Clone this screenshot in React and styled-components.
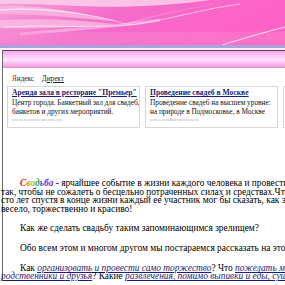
import React from "react";
import styled, { createGlobalStyle } from "styled-components";

const GlobalStyle = createGlobalStyle`
  html, body {
    margin: 0;
    padding: 0;
    background: #ffffff;
    overflow: hidden;
  }
  body {
    font-family: "Liberation Serif", "Times New Roman", serif;
    color: #000;
  }
`;

const ads = [
  {
    title: "Аренда зала в ресторане \"Премьер\"",
    lines: ["Центр города. Банкетный зал для свадеб,", "банкетов и других мероприятий."],
    url: "www.restoran-premier.ru",
  },
  {
    title: "Проведение свадеб в Москве",
    lines: ["Проведение свадеб на высшем уровне:", "на природе в Подмосковье, в Москве"],
    url: "www.svadba-moskva.ru",
  },
  {
    title: "Свадебные платья",
    lines: ["Большой выбор платьев", "для невест"],
    url: "www.plat.ru",
  },
];

const rainbow = ["#d81818", "#e89018", "#c8c010", "#28a048", "#2070d0", "#5030c0", "#a030b0"];

const Header = () => (
  <Banner>
    <svg width="285" height="45" viewBox="0 0 285 45">
      <defs>
        <linearGradient id="bg" x1="0" y1="0" x2="1" y2="0.3">
          <stop offset="0" stopColor="#f7a2d8" />
          <stop offset="0.45" stopColor="#f36cc9" />
          <stop offset="1" stopColor="#ff62c6" />
        </linearGradient>
        <linearGradient id="fade" x1="0" y1="0" x2="1" y2="0">
          <stop offset="0" stopColor="#ffffff" stopOpacity="0.8" />
          <stop offset="1" stopColor="#ffffff" stopOpacity="0" />
        </linearGradient>
      </defs>
      <rect width="285" height="45" fill="url(#bg)" />
      <path d="M0 0 H210 C170 6 120 8 80 6 C50 5 20 3 0 4 Z" fill="#fbd0ec" opacity="0.85" />
      <path d="M0 6 C40 4 90 14 120 22 C80 18 40 14 0 14 Z" fill="#f9b8e2" opacity="0.8" />
      <path d="M0 20 C40 18 80 20 115 24 C90 27 50 29 0 28 Z" fill="#fbc4e6" opacity="0.7" />
      <path d="M0 10 C50 6 110 18 125 24 C160 14 200 6 230 2" stroke="url(#fade)" strokeWidth="1.2" fill="none" />
      <path d="M5 27 C60 24 110 30 150 22 C190 14 210 8 240 4" stroke="#ffffff" strokeOpacity="0.6" strokeWidth="1" fill="none" />
      <path d="M20 34 C70 30 120 26 160 20" stroke="#ffffff" strokeOpacity="0.35" strokeWidth="3" fill="none" />
      <path d="M0 32 H285 V45 H0 Z" fill="#f890d4" opacity="0.35" />
      <path d="M222 45 C245 38 265 32 285 27" stroke="#ffffff" strokeOpacity="0.8" strokeWidth="1" fill="none" />
    </svg>
  </Banner>
);

const App = () => (
  <>
    <GlobalStyle />
    <Page>
      <Header />
      <Stripe />
      <Frame>
        <NavBar />
        <AdsBlock>
          <AdsLabel>
            <span className="ya">Я</span>ндекс <a>Директ</a>
          </AdsLabel>
          <AdsRow>
            {ads.map((ad) => (
              <AdBox key={ad.title}>
                <AdTitle>{ad.title}</AdTitle>
                {ad.lines.map((line) => (
                  <AdText key={line}>{line}</AdText>
                ))}
                <AdUrl>{ad.url}</AdUrl>
              </AdBox>
            ))}
          </AdsRow>
        </AdsBlock>
        <Article>
          <Para>
            <Line>
              <Brand>
                {"Свадьба".split("").map((ch, i) => (
                  <span key={i} style={{ color: rainbow[i] }}>
                    {ch}
                  </span>
                ))}
              </Brand>{" "}
              - ярчайшее событие в жизни каждого человека и провести ее
            </Line>
            <Line>так, чтобы не сожалеть о бесцельно потраченных силах и средствах.Что</Line>
            <Line>сто лет спустя в конце жизни каждый ее участник мог бы сказать, как это было</Line>
            <Line>весело, торжественно и красиво!</Line>
          </Para>
          <Para>
            <Line>Как же сделать свадьбу таким запоминающимся зрелищем?</Line>
          </Para>
          <Para>
            <Line>Обо всем этом и многом другом мы постараемся рассказать на этом сайте.</Line>
          </Para>
          <Para>
            <Line>
              Как <TextLink>организовать и провести само торжество</TextLink>? Что{" "}
              <TextLink>пожелать молодым их родителям,</TextLink>
            </Line>
            <Line>
              <TextLink>родственники и друзья</TextLink>? Какие{" "}
              <TextLink>развлечения, помимо выпивки и еды, существуют на свадьбе</TextLink>?
            </Line>
          </Para>
        </Article>
      </Frame>
    </Page>
  </>
);

export default App;

const Page = styled.div`
  width: 285px;
  height: 285px;
  overflow: hidden;
  background: #fff;
`;

const Banner = styled.div`
  height: 45px;
  svg {
    display: block;
  }
`;

const Stripe = styled.div`
  height: 3px;
  background: #aaa2da;
  border-bottom: 2px solid #fbeefa;
`;

const Frame = styled.div`
  margin-left: 2px;
  border-left: 1px solid #6a6a6a;
  width: 400px;
`;

const NavBar = styled.div`
  height: 16px;
  border-top: 1px solid #6a3a5e;
  border-bottom: 1px solid #e592d6;
  background: linear-gradient(#f4a6e8 0%, #fcc8f6 30%, #ffe2ff 55%, #f8b8ee 80%, #f0a0e2 100%);
`;

const AdsBlock = styled.div`
  padding: 6px 0 0 4px;
`;

const AdsLabel = styled.div`
  font-size: 7.2px;
  line-height: 10px;
  padding-left: 5px;
  color: #222;
  .ya {
    color: #d01010;
  }
  a {
    margin-left: 6px;
    text-decoration: underline;
  }
`;

const AdsRow = styled.div`
  display: flex;
  gap: 5.5px;
  margin-top: 2px;
`;

const AdBox = styled.div`
  flex: none;
  box-sizing: border-box;
  width: 132.5px;
  min-width: 0;
  height: 42px;
  overflow: hidden;
  padding: 1px 2px 0 4px;
  border: 1px solid #d8d8d8;
`;

const AdTitle = styled.div`
  font-size: 7.6px;
  line-height: 10px;
  font-weight: bold;
  color: #1c1c7a;
  text-decoration: underline;
  white-space: nowrap;
`;

const AdText = styled.div`
  font-size: 7.3px;
  line-height: 9px;
  color: #111;
  white-space: nowrap;
  &:first-of-type {
    margin-top: 1px;
  }
`;

const AdUrl = styled.div`
  font-size: 5px;
  line-height: 8px;
  color: #b0b0b0;
`;

const Article = styled.div`
  padding-top: 51px;
  margin-left: -2px;
  font-size: 9.4px;
  line-height: 8.6px;
`;

const Para = styled.p`
  margin: 0 0 11px 0;
`;

const Line = styled.div`
  white-space: nowrap;
  &:first-child {
    text-indent: 19px;
  }
`;

const Brand = styled.i`
  font-weight: bold;
`;

const TextLink = styled.a`
  font-style: italic;
  color: #1c1c7a;
  text-decoration: underline;
`;
